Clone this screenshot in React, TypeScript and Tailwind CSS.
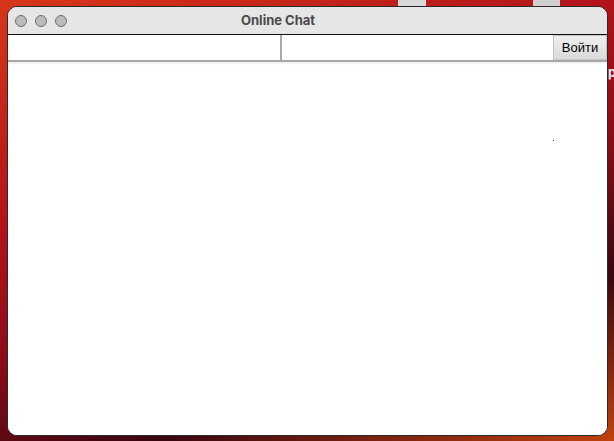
export default function App() {
  return (
    <div className="relative w-[614px] h-[441px] overflow-hidden bg-[linear-gradient(160deg,#d8361a_0%,#b0121a_35%,#8a0c18_55%,#3a0610_75%,#c2420e_100%)] pt-[6px] pl-[7px]">
      {/* desktop items peeking behind the window */}
      <div className="absolute left-[398px] top-0 w-[28px] h-[6px] bg-[#d9d9d9]" />
      <div className="absolute left-[533px] top-0 w-[27px] h-[6px] bg-[#cfcfcf]" />
      <div className="absolute left-[608px] top-[66px] text-[13px] font-bold text-[#e6e6e6] leading-none font-['Inter',sans-serif]">
        р
      </div>

      <div className="relative w-[601px] h-[430px] rounded-[10px] border border-[#2a2a2a] bg-white overflow-hidden flex flex-col">
        {/* title bar */}
        <div className="relative h-[28px] shrink-0 bg-[#e6e6e6] border-b border-[#111] flex items-center pl-[7px] gap-[8px]">
          <span className="w-[12px] h-[12px] rounded-full bg-[#bcbcbc] border border-[#707070]" />
          <span className="w-[12px] h-[12px] rounded-full bg-[#bcbcbc] border border-[#707070]" />
          <span className="w-[12px] h-[12px] rounded-full bg-[#bcbcbc] border border-[#707070]" />
          <span className="ml-[166px] text-[13px] font-bold text-[#4a4a4a] font-['Inter',sans-serif]">
            Online Chat
          </span>
        </div>

        {/* login row */}
        <div className="h-[27px] shrink-0 flex border-b-2 border-[#a8a8a8]">
          <input className="w-[272px] h-full bg-white outline-none px-1 text-[13px]" />
          <div className="w-[2px] bg-[#a9a9a9]" />
          <input className="w-[271px] h-full bg-white outline-none px-1 text-[13px]" />
          <button className="w-[54px] h-full ml-[1px] bg-[linear-gradient(#f0f0f0,#dadada)] border border-[#c4c4c4] text-[13px] text-black font-['Liberation_Sans',sans-serif]">
            Войти
          </button>
        </div>
        <div className="h-[3px] shrink-0 bg-[linear-gradient(#ececec,#ffffff)]" />

        {/* chat area */}
        <div className="relative flex-1 bg-white">
          <div className="absolute left-[545px] top-[75px] w-px h-px bg-[#333]" />
        </div>
      </div>
    </div>
  );
}
